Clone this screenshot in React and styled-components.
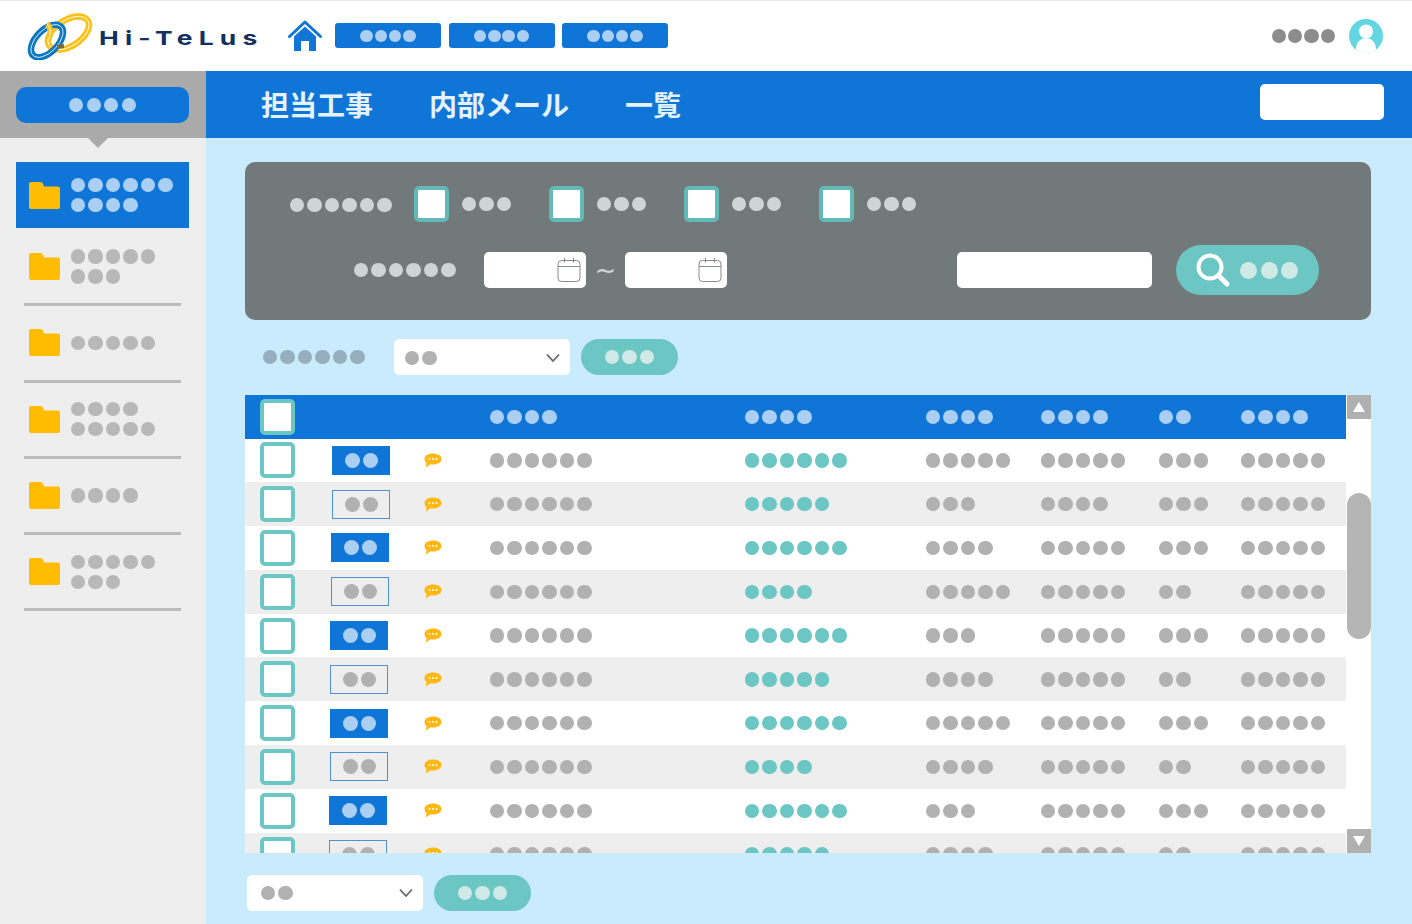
import styled, { createGlobalStyle } from "styled-components";

const BLUE = "#0f75d6";
const TEAL = "#6cc6c3";
const GREY_DOT = "#b1b1b1";

const Global = createGlobalStyle`
  html, body {
    margin: 0;
    padding: 0;
    background: #c9ebfc;
    overflow: hidden;
  }
  * {
    box-sizing: border-box;
  }
`;

const Page = styled.div`
  width: 1412px;
  height: 924px;
  display: flex;
  flex-direction: column;
  font-family: "Noto Sans CJK JP", "Noto Sans", sans-serif;
`;

// header
const Header = styled.header`
  height: 70.5px;
  flex: none;
  display: flex;
  align-items: center;
  background: #fff;
  border-top: 1px solid #e8e8e8;
  padding: 0 29px 0 27px;
`;

const LogoWrap = styled.div`
  display: flex;
  align-items: center;
  width: 261px;
  flex: none;
`;

const LogoText = styled.span`
  font-family: Inter, sans-serif;
  font-weight: 700;
  font-size: 22px;
  line-height: 1;
  color: #11305f;
  letter-spacing: 5.2px;
  white-space: nowrap;
  margin: 4px 0 0 6px;
  transform: scale(1.2, 0.87);
  transform-origin: left center;
`;

const NavButtons = styled.nav`
  display: flex;
  gap: 7.5px;
  margin-left: 13px;
`;

const NavButton = styled.div`
  width: 106px;
  height: 25px;
  background: ${BLUE};
  border-radius: 3px;
  display: flex;
  align-items: center;
  justify-content: center;
`;

const UserArea = styled.div`
  margin-left: auto;
  display: flex;
  align-items: center;
  gap: 14px;
`;

// dots stand in for the blurred labels
const DotRow = styled.div`
  display: flex;
  flex: none;
  gap: ${(p) => p.$gap}px;
`;

const Dot = styled.span`
  width: ${(p) => p.$size}px;
  height: ${(p) => p.$size}px;
  border-radius: 50%;
  background: ${(p) => p.$color};
`;

const Dots = ({ n, color = GREY_DOT, size = 14.4, gap = 3.1 }) => (
  <DotRow $gap={gap}>
    {Array.from({ length: n }, (_, i) => (
      <Dot key={i} $size={size} $color={color} />
    ))}
  </DotRow>
);

// below header
const Body = styled.div`
  flex: 1;
  display: flex;
  min-height: 0;
`;

const Sidebar = styled.aside`
  width: 206px;
  flex: none;
  background: #eeeeee;
`;

const SideTop = styled.div`
  position: relative;
  height: 67.5px;
  background: #aaaaaa;
  padding: 16.5px 17px 0 16px;

  &::after {
    content: "";
    position: absolute;
    left: 88px;
    top: 67.5px;
    border-left: 10px solid transparent;
    border-right: 10px solid transparent;
    border-top: 10px solid #aaaaaa;
  }
`;

const SideButton = styled.div`
  height: 36px;
  border-radius: 10px;
  background: ${BLUE};
  display: flex;
  align-items: center;
  justify-content: center;
`;

const ActiveItem = styled.div`
  margin: 24px 17px 2px 16px;
  height: 66px;
  background: ${BLUE};
  display: flex;
  align-items: center;
  padding-left: 13px;
  gap: 11px;
`;

const SideItem = styled.div`
  margin: 0 25px 0 24px;
  height: 76.3px;
  padding-left: 5px;
  display: flex;
  align-items: center;
  gap: 11px;
  border-bottom: 3px solid #bbbbbb;
`;

const SideLabel = styled.div`
  display: flex;
  flex-direction: column;
  gap: 5.6px;
`;

const Main = styled.main`
  flex: 1;
  min-width: 0;
  display: flex;
  flex-direction: column;
`;

const TitleBar = styled.div`
  height: 67.5px;
  flex: none;
  background: ${BLUE};
  display: flex;
  align-items: center;
  gap: 56px;
  padding: 0 28px 0 55px;
`;

const Title = styled.h1`
  margin: 0;
  font-size: 28px;
  line-height: 1;
  font-weight: 700;
  color: #e4f2fc;
  white-space: nowrap;
`;

const TitleBox = styled.div`
  width: 124px;
  height: 36px;
  margin-left: auto;
  margin-top: -4px;
  background: #fff;
  border-radius: 5px;
`;

const Content = styled.div`
  flex: 1;
  padding: 24px 41px 0 39px;
  display: flex;
  flex-direction: column;
`;

const FilterPanel = styled.section`
  height: 158px;
  flex: none;
  background: #72797b;
  border-radius: 10px;
  padding-top: 24px;
`;

const FilterRow = styled.div`
  display: flex;
  align-items: center;
  padding-left: 45px;
`;

const DateRow = styled(FilterRow)`
  height: 50px;
  margin-top: 23px;
  padding: 0 52px 0 109px;
`;

const FilterLabel = styled.div`
  width: 124px;
  padding-top: 2px;
`;

const DateLabel = styled.div`
  width: 130px;
`;

const CheckGroup = styled.label`
  width: 135px;
  display: flex;
  align-items: center;
  gap: 13px;
`;

const Check = styled.span`
  display: block;
  flex: none;
  width: 35px;
  height: 36px;
  background: #fff;
  border: 4px solid ${(p) => p.$color || TEAL};
  border-radius: 5px;
`;

const DateInput = styled.div`
  width: 102px;
  height: 36px;
  background: #fff;
  border-radius: 5px;
  display: flex;
  align-items: center;
  justify-content: flex-end;
  padding-right: 5px;
`;

const Tilde = styled.span`
  width: 39px;
  text-align: center;
  font-family: "DejaVu Sans", sans-serif;
  font-size: 26px;
  line-height: 1;
  color: #cdd5d6;
`;

const SearchInput = styled.div`
  width: 195px;
  height: 36px;
  margin-left: auto;
  background: #fff;
  border-radius: 5px;
`;

const SearchButton = styled.button`
  width: 143px;
  height: 50px;
  margin-left: 24px;
  padding: 0 21px 0 20px;
  border: 0;
  border-radius: 25px;
  background: ${TEAL};
  display: flex;
  align-items: center;
  justify-content: space-between;
`;

const Toolbar = styled.div`
  height: 36px;
  margin-top: 19px;
  padding-left: 18px;
  flex: none;
  display: flex;
  align-items: center;
`;

const SelectBox = styled.div`
  width: 176px;
  height: 36px;
  flex: none;
  margin-left: ${(p) => p.$left}px;
  background: #fff;
  border-radius: 5px;
  display: flex;
  align-items: center;
  justify-content: space-between;
  padding: ${(p) => p.$top}px 10px 0 ${(p) => p.$pad}px;
`;

const PillButton = styled.button`
  width: 97px;
  height: 36px;
  margin-left: 11px;
  border: 0;
  padding: 0;
  border-radius: 18px;
  background: ${TEAL};
  display: flex;
  align-items: center;
  justify-content: center;
`;

const TableWrap = styled.section`
  height: 458px;
  flex: none;
  margin-top: 20px;
  background: #fff;
  display: flex;
  overflow: hidden;
`;

const TableInner = styled.div`
  width: 1101px;
  flex: none;
  margin-right: 1px;
`;

const COLUMNS = "87px 92px 66px 255px 181px 115px 118px 82px 1fr";

const HeadRow = styled.div`
  height: 43.5px;
  background: ${BLUE};
  display: grid;
  grid-template-columns: ${COLUMNS};
  align-items: center;
`;

const Row = styled.div`
  height: 43.8px;
  background: ${(p) => (p.$alt ? "#eeeeee" : "#fff")};
  display: grid;
  grid-template-columns: ${COLUMNS};
  align-items: center;
`;

const CheckCell = styled.div`
  padding-left: 15px;
`;

const Tag = styled.div`
  width: 58px;
  height: 29px;
  margin-left: ${(p) => p.$shift}px;
  background: ${(p) => (p.$solid ? BLUE : "transparent")};
  border: 1.5px solid ${(p) => (p.$solid ? BLUE : "#4e90d6")};
  display: flex;
  align-items: center;
  justify-content: center;
`;

const Scrollbar = styled.div`
  width: 24px;
  flex: none;
  display: flex;
  flex-direction: column;
`;

const ScrollBtn = styled.div`
  width: 24px;
  height: 24px;
  flex: none;
  background: #b0b0b0;
  display: flex;
  align-items: center;
  justify-content: center;
`;

const ScrollThumb = styled.div`
  height: 146px;
  margin: 74px 0 190px;
  flex: none;
  border-radius: 12px;
  background: #b5b5b5;
`;

const Footer = styled.div`
  display: flex;
  align-items: center;
  margin-top: 22px;
`;

// drawings
const LogoMark = () => (
  <svg width="66" height="48" viewBox="0 0 66 48">
    <g fill="none">
      <ellipse cx="41.5" cy="21" rx="23" ry="13" transform="rotate(-33 41.5 21)" stroke="#fcc21c" strokeWidth="6.5" />
      <ellipse cx="41.5" cy="21" rx="23" ry="13" transform="rotate(-33 41.5 21)" stroke="#fff" strokeWidth="0.8" />
      <ellipse cx="20" cy="29" rx="20" ry="11" transform="rotate(-46 20 29)" stroke="#0a77c2" strokeWidth="6.5" />
      <ellipse cx="20" cy="29" rx="20" ry="11" transform="rotate(-46 20 29)" stroke="#fff" strokeWidth="0.8" />
      <path d="M20 12 C24 15 24 22 22 27" stroke="#fcc21c" strokeWidth="5.5" />
      <path d="M20 12 C24 15 24 22 22 27" stroke="#fff" strokeWidth="0.8" />
      <path d="M30 35 l7 -1" stroke="#7b6a3a" strokeWidth="4" />
    </g>
  </svg>
);

const HomeIcon = () => (
  <svg width="34" height="31" viewBox="0 0 34 31">
    <path d="M1.5 16.5 17 2 32.5 16.5" fill="none" stroke={BLUE} strokeWidth="3" strokeLinecap="round" strokeLinejoin="round" />
    <path d="M6 16.5 17 6.5 28 16.5V31H21V21H13V31H6Z" fill={BLUE} />
  </svg>
);

const Avatar = () => (
  <svg width="34" height="34" viewBox="0 0 34 34">
    <defs>
      <clipPath id="avatar-clip">
        <circle cx="17" cy="17" r="17" />
      </clipPath>
    </defs>
    <circle cx="17" cy="17" r="17" fill="#63d6e1" />
    <g clipPath="url(#avatar-clip)" fill="#fff">
      <circle cx="17" cy="12.5" r="7" />
      <ellipse cx="17" cy="29" rx="10" ry="10" />
    </g>
  </svg>
);

const FolderIcon = () => (
  <svg width="31" height="27" viewBox="0 0 31 27">
    <path d="M2 0H11.500C13 0 14 1 15 4.500H29C30.200 4.500 31 5.300 31 6.500V25C31 26.200 30.200 27 29 27H2C.8 27 0 26.200 0 25V2C0 .8.8 0 2 0Z" fill="#ffbc00" />
  </svg>
);

const CalendarIcon = () => (
  <svg width="24" height="26" viewBox="0 0 24 26" fill="none" stroke="#858b8d" strokeWidth="1">
    <rect x="1" y="3.500" width="22" height="21" rx="3.500" />
    <path d="M1 9.500H23M7.500 1V5.500M16.500 1V5.500" />
  </svg>
);

const SearchIcon = () => (
  <svg width="34" height="34" viewBox="0 0 34 34" fill="none" stroke="#fff">
    <circle cx="14" cy="14" r="11.500" strokeWidth="4" />
    <path d="M23 23 31 31" strokeWidth="5" strokeLinecap="round" />
  </svg>
);

const Chevron = () => (
  <svg width="14" height="10" viewBox="0 0 14 10" fill="none" stroke="#666" strokeWidth="1.800">
    <path d="M1 1.500 7 8 13 1.500" />
  </svg>
);

const Bubble = () => (
  <svg width="18" height="15" viewBox="0 0 18 15">
    <path d="M9 .5C14 .5 17.500 2.800 17.500 6S14 11.500 9 11.500C8 11.500 7.300 11.400 6.500 11.300L1.800 14.500 2.600 10C1.200 9.100.5 7.700.5 6 .5 2.800 4 .5 9 .5Z" fill="#fdb813" />
    <g fill="#fff">
      <circle cx="5.500" cy="6" r="1" />
      <circle cx="9" cy="6" r="1" />
      <circle cx="12.500" cy="6" r="1" />
    </g>
  </svg>
);

const Triangle = ({ down }) => (
  <svg width="12" height="10" viewBox="0 0 12 10">
    <path d={down ? "M0 0H12L6 10Z" : "M6 0 12 10H0Z"} fill="#fff" />
  </svg>
);

const LIGHT = "#aacff2";
const PANEL_DOT = "#cdd5d6";
const MINT = "#cfe9e6";

const sideItems = [
  [5, 3],
  [5],
  [4, 5],
  [4],
  [5, 3],
];

// [teal, col3, col4, col5]
const rows = [
  [6, 5, 5, 3],
  [5, 3, 4, 3],
  [6, 4, 5, 3],
  [4, 5, 5, 2],
  [6, 3, 5, 3],
  [5, 4, 5, 2],
  [6, 5, 5, 3],
  [4, 4, 5, 2],
  [6, 3, 5, 3],
  [5, 4, 5, 2],
];

const tagShift = [0, 0, -1, -1, -2, -2, -2, -2, -3, -3];

const App = () => {
  return (
    <Page>
      <Global />
      <Header>
        <LogoWrap>
          <LogoMark />
          <LogoText>Hi-TeLus</LogoText>
        </LogoWrap>
        <HomeIcon />
        <NavButtons>
          <NavButton><Dots n={4} color={LIGHT} size={12.5} gap={1.8} /></NavButton>
          <NavButton><Dots n={4} color={LIGHT} size={12.5} gap={1.8} /></NavButton>
          <NavButton><Dots n={4} color={LIGHT} size={12.5} gap={1.8} /></NavButton>
        </NavButtons>
        <UserArea>
          <Dots n={4} color="#8c8c8c" size={14.5} gap={1.8} />
          <Avatar />
        </UserArea>
      </Header>

      <Body>
        <Sidebar>
          <SideTop>
            <SideButton><Dots n={4} color={LIGHT} /></SideButton>
          </SideTop>
          <ActiveItem>
            <FolderIcon />
            <SideLabel>
              <Dots n={6} color={LIGHT} />
              <Dots n={4} color={LIGHT} />
            </SideLabel>
          </ActiveItem>
          {sideItems.map((lines, i) => (
            <SideItem key={i}>
              <FolderIcon />
              <SideLabel>
                {lines.map((n, j) => (
                  <Dots key={j} n={n} color="#b8b8b8" />
                ))}
              </SideLabel>
            </SideItem>
          ))}
        </Sidebar>

        <Main>
          <TitleBar>
            <Title>担当工事</Title>
            <Title>内部メール</Title>
            <Title>一覧</Title>
            <TitleBox />
          </TitleBar>

          <Content>
            <FilterPanel>
              <FilterRow>
                <FilterLabel><Dots n={6} color={PANEL_DOT} /></FilterLabel>
                {[0, 1, 2, 3].map((i) => (
                  <CheckGroup key={i}>
                    <Check $color="#62b9b7" />
                    <Dots n={3} color={PANEL_DOT} />
                  </CheckGroup>
                ))}
              </FilterRow>
              <DateRow>
                <DateLabel><Dots n={6} color={PANEL_DOT} /></DateLabel>
                <DateInput><CalendarIcon /></DateInput>
                <Tilde>~</Tilde>
                <DateInput><CalendarIcon /></DateInput>
                <SearchInput />
                <SearchButton>
                  <SearchIcon />
                  <Dots n={3} color={MINT} size={17} gap={3.5} />
                </SearchButton>
              </DateRow>
            </FilterPanel>

            <Toolbar>
              <Dots n={6} color="#96aebd" />
              <SelectBox $left={29} $pad={11} $top={2}>
                <Dots n={2} />
                <Chevron />
              </SelectBox>
              <PillButton><Dots n={3} color={MINT} /></PillButton>
            </Toolbar>

            <TableWrap>
              <TableInner>
                <HeadRow>
                  <CheckCell><Check /></CheckCell>
                  <span />
                  <span />
                  <Dots n={4} color={LIGHT} />
                  <Dots n={4} color={LIGHT} />
                  <Dots n={4} color={LIGHT} />
                  <Dots n={4} color={LIGHT} />
                  <Dots n={2} color={LIGHT} />
                  <Dots n={4} color={LIGHT} />
                </HeadRow>
                {rows.map((r, i) => (
                  <Row key={i} $alt={i % 2 === 1}>
                    <CheckCell><Check /></CheckCell>
                    <Tag $solid={i % 2 === 0} $shift={tagShift[i]}>
                      <Dots n={2} color={i % 2 === 0 ? LIGHT : GREY_DOT} size={15} gap={3} />
                    </Tag>
                    <Bubble />
                    <Dots n={6} />
                    <Dots n={r[0]} color={TEAL} />
                    <Dots n={r[1]} />
                    <Dots n={r[2]} />
                    <Dots n={r[3]} />
                    <Dots n={5} />
                  </Row>
                ))}
              </TableInner>
              <Scrollbar>
                <ScrollBtn><Triangle /></ScrollBtn>
                <ScrollThumb />
                <ScrollBtn><Triangle down /></ScrollBtn>
              </Scrollbar>
            </TableWrap>

            <Footer>
              <SelectBox $left={2} $pad={14} $top={0}>
                <Dots n={2} />
                <Chevron />
              </SelectBox>
              <PillButton><Dots n={3} color={MINT} /></PillButton>
            </Footer>
          </Content>
        </Main>
      </Body>
    </Page>
  );
};

export default App;
